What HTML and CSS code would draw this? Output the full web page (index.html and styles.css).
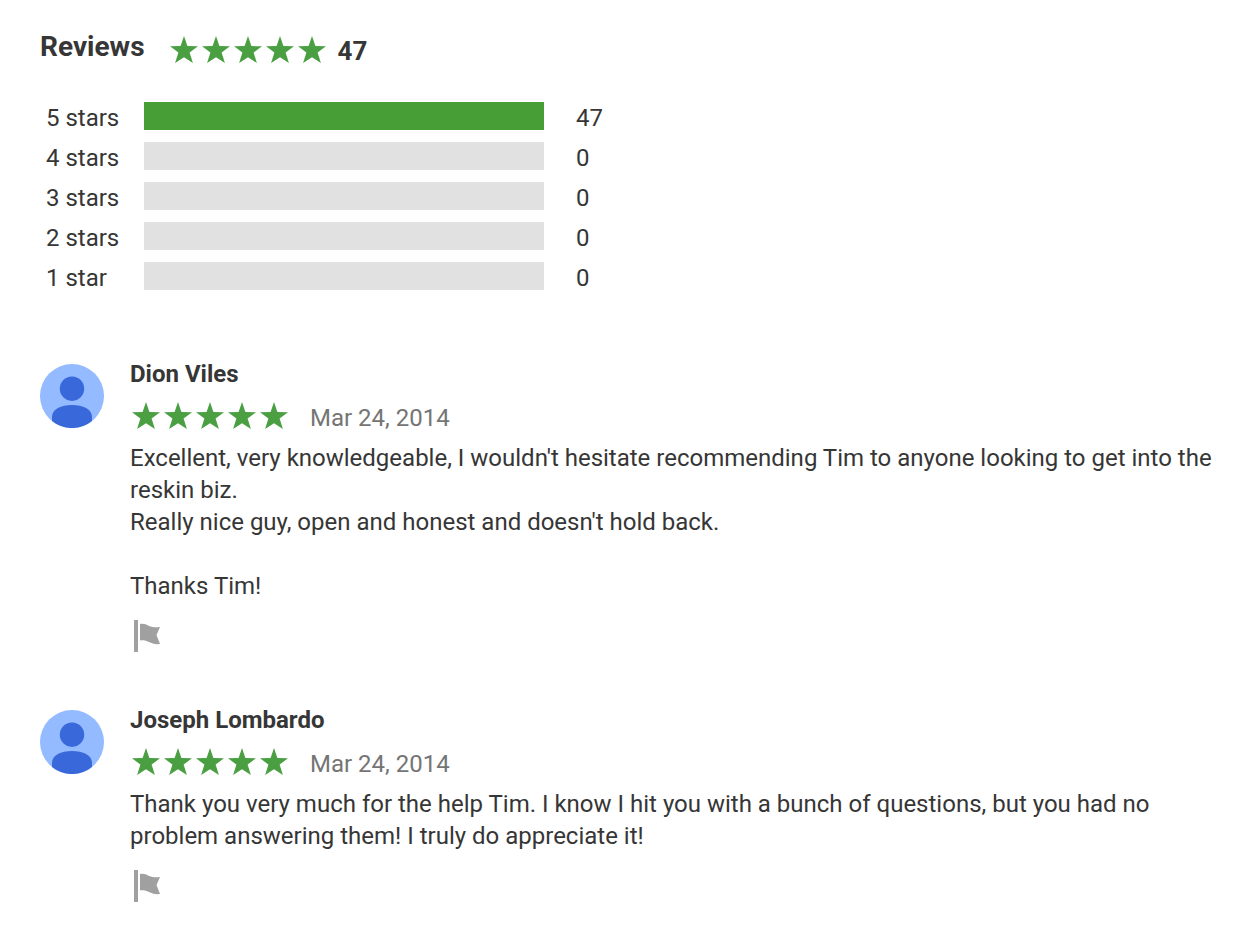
FILE: index.html
```html
<!DOCTYPE html>
<html lang="en">
<head>
    <meta charset="UTF-8">
    <meta name="viewport" content="width=device-width, initial-scale=1.0">
    <title>Reviews</title>
    <link rel="stylesheet" href="styles.css">
</head>
<body>

<!-- Shared icons -->
<svg class="icon-defs" aria-hidden="true">
    <symbol id="stars" viewBox="0 0 156 28">
        <path id="star" d="M14 0L17.4 10.1L28 10.3L19.6 16.6L22.9 27L14 21.2L5.1 27L8.4 16.6L0 10.3L10.6 10.1Z"/>
        <use href="#star" x="32"/>
        <use href="#star" x="64"/>
        <use href="#star" x="96"/>
        <use href="#star" x="128"/>
    </symbol>
    <symbol id="avatar" viewBox="0 0 64 64">
        <circle cx="32" cy="32" r="32" fill="#94baff"/>
        <circle cx="32" cy="24.7" r="12.2" fill="#3968db"/>
        <path d="M12 57V53C12 45 21 41 32 41S52 45 52 53V57A32 32 0 0 1 12 57Z" fill="#3968db"/>
    </symbol>
    <symbol id="flag" viewBox="0 0 28 32">
        <path d="M0 0H4V32H0ZM6 4C10 3.500 12 4.500 15 6C19 7.500 22 7.500 26 7L22.500 15L26 24C21 24.500 18 23.500 15 22C12 20.500 9 20 6 20.500Z" fill="#a0a0a0"/>
    </symbol>
</svg>

<main class="reviews">
    <header class="reviews-header">
        <h1>Reviews</h1>
        <svg class="stars" role="img" aria-label="5 out of 5 stars"><use href="#stars"/></svg>
        <span class="total">47</span>
    </header>

    <table class="histogram">
        <tr>
            <th scope="row">5 stars</th>
            <td><div class="bar"><div class="bar-fill" style="width: 100%"></div></div></td>
            <td class="count">47</td>
        </tr>
        <tr>
            <th scope="row">4 stars</th>
            <td><div class="bar"></div></td>
            <td class="count">0</td>
        </tr>
        <tr>
            <th scope="row">3 stars</th>
            <td><div class="bar"></div></td>
            <td class="count">0</td>
        </tr>
        <tr>
            <th scope="row">2 stars</th>
            <td><div class="bar"></div></td>
            <td class="count">0</td>
        </tr>
        <tr>
            <th scope="row">1 star</th>
            <td><div class="bar"></div></td>
            <td class="count">0</td>
        </tr>
    </table>

    <article class="review">
        <svg class="avatar" aria-hidden="true"><use href="#avatar"/></svg>
        <div class="review-body">
            <h2>Dion Viles</h2>
            <div class="rating">
                <svg class="stars" role="img" aria-label="5 out of 5 stars"><use href="#stars"/></svg>
                <time datetime="2014-03-24">Mar 24, 2014</time>
            </div>
            <p>Excellent, very knowledgeable, I wouldn't hesitate recommending Tim to anyone looking to get into the reskin biz.<br>
            Really nice guy, open and honest and doesn't hold back.<br><br>
            Thanks Tim!</p>
            <button class="flag-btn" type="button" aria-label="Flag review"><svg><use href="#flag"/></svg></button>
        </div>
    </article>

    <article class="review">
        <svg class="avatar" aria-hidden="true"><use href="#avatar"/></svg>
        <div class="review-body">
            <h2>Joseph Lombardo</h2>
            <div class="rating">
                <svg class="stars" role="img" aria-label="5 out of 5 stars"><use href="#stars"/></svg>
                <time datetime="2014-03-24">Mar 24, 2014</time>
            </div>
            <p>Thank you very much for the help Tim. I know I hit you with a bunch of questions, but you had no problem answering them! I truly do appreciate it!</p>
            <button class="flag-btn" type="button" aria-label="Flag review"><svg><use href="#flag"/></svg></button>
        </div>
    </article>
</main>

</body>
</html>
```

FILE: styles.css
```css
body {
    margin: 0;
    font-family: Roboto, Arial, sans-serif;
    font-size: 24px;
    line-height: 32px;
    color: #363636;
    background-color: #fff;
}
h1, h2, p {
    margin: 0;
}
.icon-defs {
    display: none;
}
.reviews {
    padding: 31px 16px 0 40px;
}
.reviews-header {
    display: flex;
    align-items: flex-start;
    font-size: 28px;
    font-weight: bold;
}
.reviews-header h1 {
    font-size: 28px;
    margin-right: 25px;
}
.reviews-header .stars {
    margin-top: 5px;
}
.total {
    font-size: 26px;
    margin: 4px 0 0 12px;
}
.stars {
    width: 156px;
    height: 28px;
    fill: #4a9f43;
}
.histogram {
    margin-top: 35px;
    border-collapse: collapse;
}
.histogram th,
.histogram td {
    height: 40px;
    padding: 0;
    text-align: left;
    vertical-align: top;
    font-weight: normal;
}
.histogram th {
    width: 98px;
    padding-left: 6px;
}
.histogram .count {
    padding-left: 32px;
}
.bar {
    width: 400px;
    height: 28px;
    background-color: #e1e1e1;
}
.bar-fill {
    height: 100%;
    background-color: #489e36;
}
.review {
    display: flex;
    gap: 26px;
    margin-top: 52px;
}
.histogram + .review {
    margin-top: 56px;
}
.avatar {
    flex: none;
    width: 64px;
    height: 64px;
    margin-top: 6px;
}
.review h2 {
    font-size: 24px;
}
.rating {
    display: flex;
    gap: 22px;
    margin: 12px 0 8px 2px;
    color: #757575;
}
.flag-btn {
    display: block;
    margin-top: 18px;
    padding: 0 4px;
    border: none;
    background: none;
    cursor: pointer;
}
.flag-btn svg {
    display: block;
    width: 28px;
    height: 32px;
}
```
